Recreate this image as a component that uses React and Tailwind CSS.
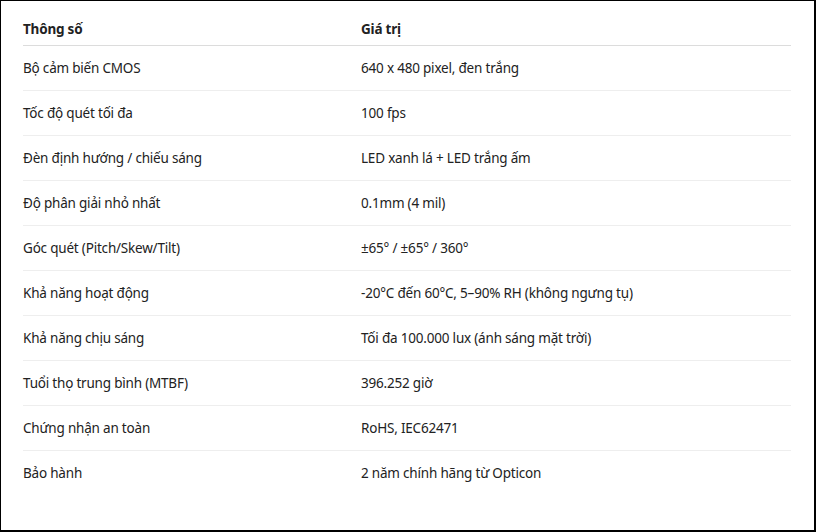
import React from 'react';

const rows = [
    ['Bộ cảm biến CMOS', '640 x 480 pixel, đen trắng'],
    ['Tốc độ quét tối đa', '100 fps'],
    ['Đèn định hướng / chiếu sáng', 'LED xanh lá + LED trắng ấm'],
    ['Độ phân giải nhỏ nhất', '0.1mm (4 mil)'],
    ['Góc quét (Pitch/Skew/Tilt)', '±65° / ±65° / 360°'],
    ['Khả năng hoạt động', '-20°C đến 60°C, 5–90% RH (không ngưng tụ)'],
    ['Khả năng chịu sáng', 'Tối đa 100.000 lux (ánh sáng mặt trời)'],
    ['Tuổi thọ trung bình (MTBF)', '396.252 giờ'],
    ['Chứng nhận an toàn', 'RoHS, IEC62471'],
    ['Bảo hành', '2 năm chính hãng từ Opticon'],
];

const App = () => {
    return (
        <div className="w-[816px] h-[532px] bg-white border-l border-t border-r-2 border-b-2 border-black overflow-hidden font-['Noto_Sans',sans-serif] text-[13.5px] tracking-[-0.2px] text-[#222]">
            <div className="pl-[22px] pt-[12px]">
                <table className="w-[768px] border-collapse">
                    <thead>
                        <tr className="border-b border-[#dcdcdc]">
                            <th className="w-[338px] text-left font-bold py-[6px] leading-5">Thông số</th>
                            <th className="text-left font-bold py-[6px] leading-5">Giá trị</th>
                        </tr>
                    </thead>
                    <tbody>
                        {rows.map(([k, v], i) => (
                            <tr key={k} className={i < rows.length - 1 ? 'border-b border-[#eeeeee]' : ''}>
                                <td className="h-[45px] leading-5 align-middle">{k}</td>
                                <td className="h-[45px] leading-5 align-middle">{v}</td>
                            </tr>
                        ))}
                    </tbody>
                </table>
            </div>
        </div>
    );
};

export default App;
